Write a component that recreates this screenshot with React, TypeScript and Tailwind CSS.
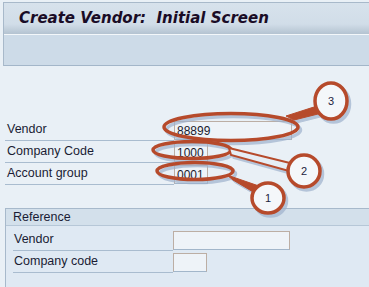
import React from 'react'

const RED = '#b64a2b'

type Field = { label: string; value: string; width: string }

const MAIN_FIELDS: Field[] = [
  { label: 'Vendor', value: '88899', width: 'w-[118px]' },
  { label: 'Company Code', value: '1000', width: 'w-[34px]' },
  { label: 'Account group', value: '0001', width: 'w-[34px]' }
]

const REF_FIELDS: Field[] = [
  { label: 'Vendor', value: '', width: 'w-[117px]' },
  { label: 'Company code', value: '', width: 'w-[34px]' }
]

function InputBox({ value, width }: { value: string; width: string }) {
  return (
    <div
      className={`${width} h-[19px] shrink-0 bg-[#eef3f8] border border-[#bcaea4] border-b-[#a2b6ca] px-[2px] text-[12px] leading-[18px] text-[#1c1c2e]`}
    >
      {value}
    </div>
  )
}

function Callouts() {
  const shapes = (
    <>
      <ellipse cx="231" cy="127" rx="67" ry="13.5" fill="none" strokeWidth="3.5" />
      <polygon points="286,116 317,106 318,114 294,120" strokeWidth="1" />
      <ellipse cx="331" cy="101" rx="16" ry="18" strokeWidth="3.5" />

      <ellipse cx="192" cy="150" rx="39" ry="8.5" fill="none" strokeWidth="3.5" />
      <polygon points="229,148 290,163 289,171 231,155" strokeWidth="2" />
      <ellipse cx="304" cy="171" rx="16" ry="16" strokeWidth="3.5" />

      <ellipse cx="195" cy="171" rx="38" ry="8.5" fill="none" strokeWidth="3.5" />
      <polygon points="227,175 259,186 255,193 233,180" strokeWidth="1" />
      <ellipse cx="268" cy="198" rx="16" ry="15" strokeWidth="3.5" />
    </>
  )

  return (
    <svg
      className="absolute inset-0 pointer-events-none"
      width="369"
      height="287"
      viewBox="0 0 369 287"
    >
      <g transform="translate(2.5 3)" stroke="#9fb2cd" fill="#9fb2cd" opacity="0.7">
        {shapes}
      </g>
      <g stroke={RED}>
        <ellipse cx="231" cy="127" rx="67" ry="13.5" fill="none" strokeWidth="3.5" />
        <polygon points="286,116 317,106 318,114 294,120" fill={RED} strokeWidth="1" />
        <ellipse cx="331" cy="101" rx="16" ry="18" fill="#f4f7fa" strokeWidth="3.5" />

        <ellipse cx="192" cy="150" rx="39" ry="8.5" fill="none" strokeWidth="3.5" />
        <polygon points="229,148 290,163 289,171 231,155" fill="#e6edf4" strokeWidth="2" />
        <ellipse cx="304" cy="171" rx="16" ry="16" fill="#f4f7fa" strokeWidth="3.5" />

        <ellipse cx="195" cy="171" rx="38" ry="8.5" fill="none" strokeWidth="3.5" />
        <polygon points="227,175 259,186 255,193 233,180" fill={RED} strokeWidth="1" />
        <ellipse cx="268" cy="198" rx="16" ry="15" fill="#f4f7fa" strokeWidth="3.5" />
      </g>
      <g
        fill="#1d2340"
        fontSize="11"
        fontFamily="'Liberation Sans', sans-serif"
        textAnchor="middle"
      >
        <text x="331" y="105">3</text>
        <text x="304" y="175">2</text>
        <text x="268" y="202">1</text>
      </g>
    </svg>
  )
}

export default function App() {
  return (
    <div className="relative w-[369px] h-[287px] overflow-hidden bg-[#e9f0f6] font-['Liberation_Sans',sans-serif] text-[#1a1c34]">
      {/* header */}
      <div className="mt-[2px] ml-[3px] border-t border-l border-[#a8b9ca]">
        <div className="h-[31px] flex items-center pl-[15px] bg-[linear-gradient(to_bottom,#d7e2ec_0%,#d1dde8_68%,#b4c3d1_100%)]">
          <span className="whitespace-pre font-['DejaVu_Sans',sans-serif] font-bold italic text-[15px] text-[#1a0c26]">
            Create Vendor:  Initial Screen
          </span>
        </div>
        <div className="h-px bg-[#f3f7fa]" />
        <div className="h-[31px] bg-[#cddbe8] border-b border-[#a3b6c9]" />
      </div>

      {/* initial screen fields */}
      <div className="pl-[5px] pt-[53px]">
        {MAIN_FIELDS.map(field => (
          <div key={field.label} className="flex items-center h-[22px]">
            <div className="w-[169px] h-full flex items-end pb-[5px] pl-[2px] border-b border-[#a9bccf] text-[12.5px] leading-none">
              {field.label}
            </div>
            <InputBox value={field.value} width={field.width} />
          </div>
        ))}

        {/* reference group */}
        <div className="mt-[23px] border border-r-0 border-[#a7b9cb] bg-[#dfe9f3]">
          <div className="h-[17px] flex items-center pl-[7px] bg-[#d3e0eb] border-b border-[#b6c7d7] text-[12.5px]">
            Reference
          </div>
          <div className="pl-[7px] pt-[3px] pb-[15px]">
            {REF_FIELDS.map(field => (
              <div key={field.label} className="flex items-center h-[22px]">
                <div className="w-[160px] h-full flex items-end pb-[5px] pl-[1px] border-b border-[#a9bccf] text-[12.5px] leading-none">
                  {field.label}
                </div>
                <InputBox value={field.value} width={field.width} />
              </div>
            ))}
          </div>
        </div>
      </div>

      <Callouts />
    </div>
  )
}
